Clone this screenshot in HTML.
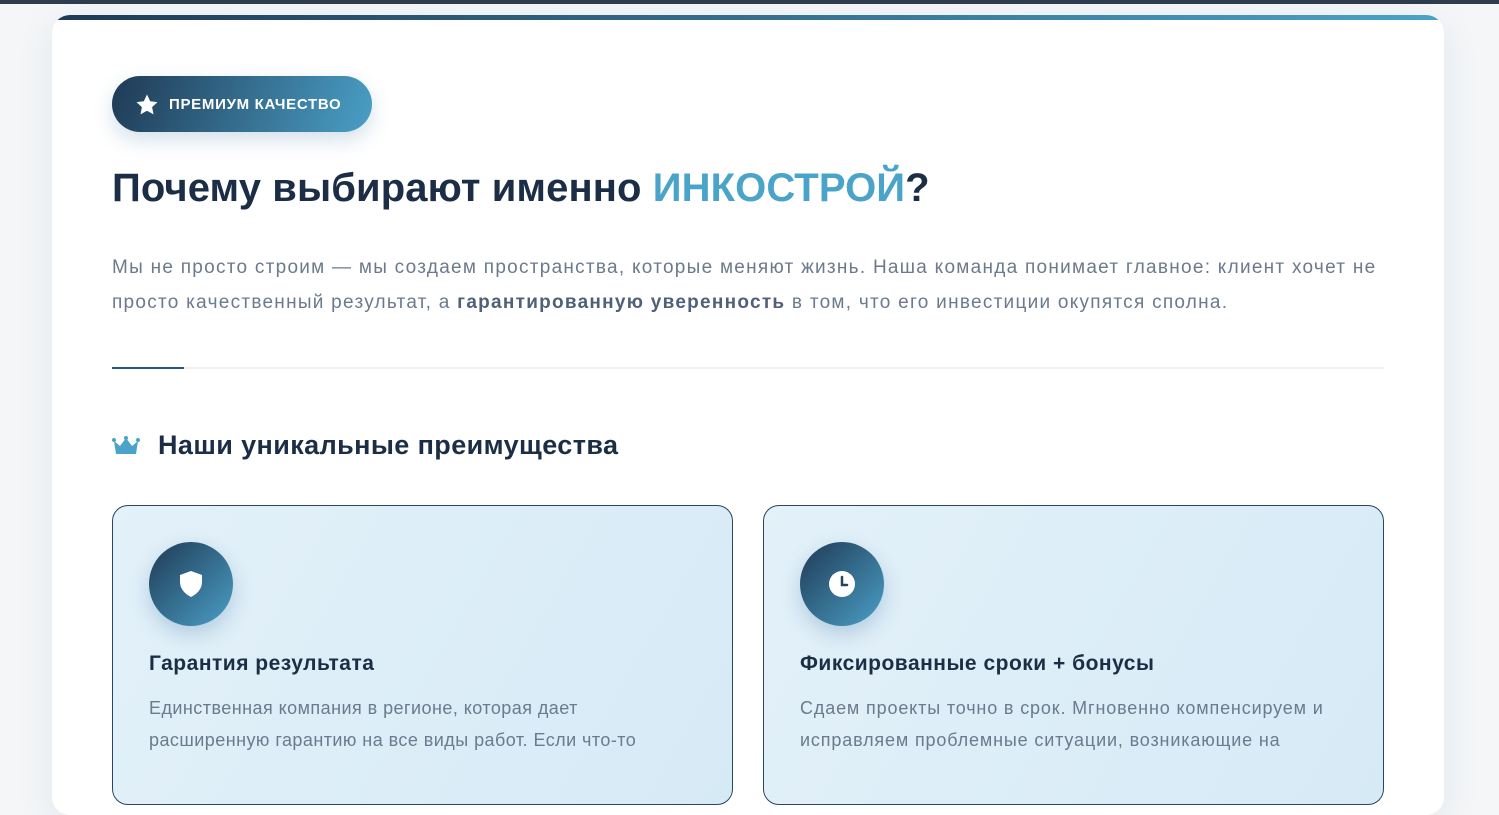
<!DOCTYPE html>
<html><head><meta charset="utf-8"><style>
*{box-sizing:border-box;margin:0;padding:0}
body{width:1499px;height:756px;overflow:hidden;background:#f4f6f8;font-family:"Liberation Sans",sans-serif;position:relative}
.top{position:absolute;left:0;top:0;width:1499px;height:4px;background:#2f3e4f}
.card{position:absolute;left:52px;top:15px;width:1392px;height:800px;background:#fff;border-radius:18px;overflow:hidden;box-shadow:0 10px 40px rgba(30,60,90,.08)}
.card:before{content:"";position:absolute;left:0;top:0;right:0;height:5px;background:linear-gradient(90deg,#1f3a55,#4aa3c8)}
.badge{position:absolute;left:60px;top:61px;width:260px;height:56px;border-radius:28px;background:linear-gradient(110deg,#1f3a55,#4a9fc6);color:#fff;font-weight:bold;font-size:15px;letter-spacing:.7px;display:flex;align-items:center;padding-left:57px;box-shadow:0 8px 20px rgba(40,100,150,.2)}
.badge svg{position:absolute;left:23px;top:17px}
h1{position:absolute;left:60px;top:151px;font-size:40px;letter-spacing:.1px;color:#1c2e45;font-weight:bold}
h1 span{color:#4aa3c8}
p.lead{position:absolute;left:60px;top:235px;width:1290px;font-size:19px;letter-spacing:1.27px;line-height:35px;color:#6b7a8c}
p.lead b{color:#4f6078}
.line{position:absolute;left:60px;top:352px;width:1272px;height:2px;background:#eef1f4}
.line:before{content:"";position:absolute;left:0;top:0;width:72px;height:2px;background:#2a5878}
h2{position:absolute;left:106px;top:415px;font-size:27px;letter-spacing:.4px;color:#1c2e45;font-weight:bold}
.crown{position:absolute;left:60px;top:420px}
.f{position:absolute;top:490px;width:621px;height:300px;border:1px solid #2c4560;border-radius:16px;background:linear-gradient(120deg,#e3f1f9,#d6eaf6)}
.ic{position:absolute;left:36px;top:36px;width:84px;height:84px;border-radius:50%;background:linear-gradient(135deg,#1f3a55,#4a9fc6);box-shadow:0 8px 20px rgba(40,100,150,.25)}
.ic svg{position:absolute;left:27px;top:27px}
.f h3{position:absolute;left:36px;top:146px;font-size:21px;letter-spacing:.5px;color:#1c2e45}
.f p{position:absolute;left:36px;top:186px;width:560px;font-size:18px;line-height:32px;color:#6b7a8c}
</style></head><body>
<div class="top"></div>
<div class="card">
<div class="badge"><svg width="24" height="24" viewBox="0 0 24 24"><path fill="#fff" d="M12 1.5l3.2 6.7 7.3.9-5.4 5 1.4 7.3L12 17.8l-6.5 3.6 1.4-7.3-5.4-5 7.3-.9z"/></svg>ПРЕМИУМ КАЧЕСТВО</div>
<h1>Почему выбирают именно <span>ИНКОСТРОЙ</span>?</h1>
<p class="lead">Мы не просто строим — мы создаем пространства, которые меняют жизнь. Наша команда понимает главное: клиент хочет не просто качественный результат, а <b>гарантированную уверенность</b> в том, что его инвестиции окупятся сполна.</p>
<div class="line"></div>
<svg class="crown" width="28" height="24" viewBox="0 0 28 24"><path fill="#4aa3c8" d="M2 6l6 5 6-8 6 8 6-5-2 13H4z"/><circle cx="2" cy="5" r="2" fill="#4aa3c8"/><circle cx="14" cy="3" r="2" fill="#4aa3c8"/><circle cx="26" cy="5" r="2" fill="#4aa3c8"/></svg>
<h2>Наши уникальные преимущества</h2>
<div class="f" style="left:60px"><div class="ic"><svg width="30" height="30" viewBox="0 0 30 30"><path fill="#fff" d="M15 2l11 4v7c0 7-5 12-11 15C9 25 4 20 4 13V6z"/></svg></div><h3>Гарантия результата</h3><p style="letter-spacing:.45px">Единственная компания в регионе, которая дает<br>расширенную гарантию на все виды работ. Если что-то</p></div>
<div class="f" style="left:711px"><div class="ic"><svg width="30" height="30" viewBox="0 0 30 30"><circle cx="15" cy="15" r="13" fill="#fff"/><path d="M15 8v8h5" stroke="#24445f" stroke-width="2.5" fill="none" stroke-linecap="round"/></svg></div><h3>Фиксированные сроки + бонусы</h3><p style="letter-spacing:.85px">Сдаем проекты точно в срок. Мгновенно компенсируем и исправляем проблемные ситуации, возникающие на</p></div>
</div>
</body></html>
